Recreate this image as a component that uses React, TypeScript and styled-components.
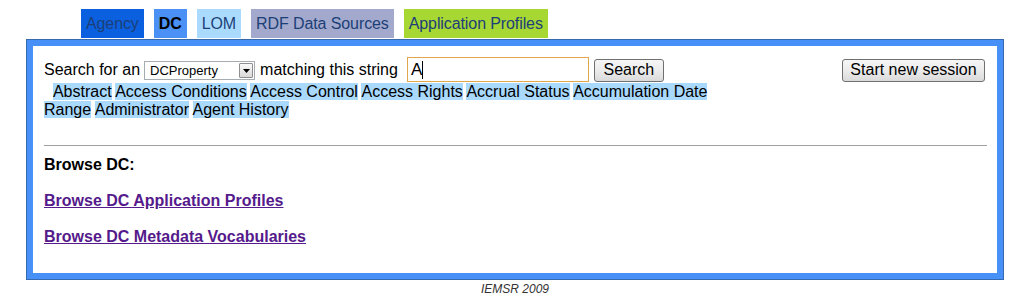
import React from "react"
import styled, { createGlobalStyle } from "styled-components"

const suggestions = [
  "Abstract",
  "Access Conditions",
  "Access Control",
  "Access Rights",
  "Accrual Status",
  "Accumulation Date",
  "Range",
  "Administrator",
  "Agent History",
]

const tabs = [
  { label: "Agency", bg: "#0b60e0", color: "#1c3f78", bold: false },
  { label: "DC", bg: "#4a90f5", color: "#000", bold: true },
  { label: "LOM", bg: "#aadbff", color: "#1c3f78", bold: false },
  { label: "RDF Data Sources", bg: "#a3a9cc", color: "#1c3f78", bold: false },
  { label: "Application Profiles", bg: "#a6d733", color: "#1c3f78", bold: false },
]

const GlobalStyle = createGlobalStyle`
  html, body {
    margin: 0;
    padding: 0;
    background: #fff;
    overflow: hidden;
  }
  body {
    font-family: "Liberation Sans", Arial, sans-serif;
    font-size: 16px;
    color: #000;
  }
`

const App: React.FC = () => {
  return (
    <Page>
      <GlobalStyle />
      <TabBar>
        {tabs.map(tab => (
          <Tab key={tab.label} bg={tab.bg} fg={tab.color} bold={tab.bold}>
            {tab.label}
          </Tab>
        ))}
      </TabBar>
      <Panel>
        <Content>
          <SearchRow>
            <Label>Search for an</Label>
            <SelectBox>
              <span>DCProperty</span>
              <ArrowBox>
                <svg width="7" height="4" viewBox="0 0 7 4">
                  <path d="M0 0 H7 L3.5 4 Z" fill="#000" />
                </svg>
              </ArrowBox>
            </SelectBox>
            <Label className="gap">matching this string</Label>
            <TextField>
              A<Caret />
            </TextField>
            <Button className="search">Search</Button>
            <Button className="session">Start new session</Button>
          </SearchRow>
          <Suggestions>
            {"\u00a0\u00a0"}
            {suggestions.map((item, index) => (
              <React.Fragment key={item}>
                {index > 0 && " "}
                <Hit>{item}</Hit>
              </React.Fragment>
            ))}
          </Suggestions>
          <Rule />
          <Heading>Browse DC:</Heading>
          <BrowseLink href="#">Browse DC Application Profiles</BrowseLink>
          <BrowseLink href="#">Browse DC Metadata Vocabularies</BrowseLink>
        </Content>
      </Panel>
      <Footer>IEMSR 2009</Footer>
    </Page>
  )
}

const Page = styled.div`
  width: 1024px;
  box-sizing: border-box;
  padding: 9px 20px 0 26px;
`

const TabBar = styled.div`
  display: flex;
  gap: 10px;
  margin-left: 55px;
  margin-bottom: 1px;
`

const Tab = styled.div<{ bg: string; fg: string; bold: boolean }>`
  height: 29px;
  line-height: 30px;
  padding: 0 5px;
  font-size: 16px;
  letter-spacing: -0.1px;
  background: ${props => props.bg};
  color: ${props => props.fg};
  font-weight: ${props => (props.bold ? 700 : 400)};
`

const Panel = styled.div`
  border: 1px solid #3669ad;
  background: #4790f7;
  padding: 6px;
`

const Content = styled.div`
  background: #fff;
  height: 227px;
  box-sizing: border-box;
  padding: 11px 10px 0 11px;
`

const SearchRow = styled.div`
  display: flex;
  align-items: center;
  height: 26px;

  .gap {
    margin-left: 5px;
  }

  .search {
    margin-left: 5px;
    width: 70px;
  }

  .session {
    margin-left: auto;
    margin-right: 2px;
    width: 143px;
  }
`

const Label = styled.span`
  font-size: 16px;
  white-space: nowrap;
`

const SelectBox = styled.div`
  display: flex;
  align-items: center;
  justify-content: space-between;
  width: 111px;
  height: 19px;
  box-sizing: border-box;
  margin-left: 4px;
  margin-top: 1px;
  padding-left: 5px;
  border: 1px solid #a5acb2;
  background: #fff;
  font-size: 13px;
`

const ArrowBox = styled.span`
  display: flex;
  align-items: center;
  justify-content: center;
  width: 14px;
  height: 15px;
  box-sizing: border-box;
  margin-right: 1px;
  border: 1px solid #8f8f8f;
  border-radius: 1px;
  background: linear-gradient(#fafafa, #d8d8d8);
`

const TextField = styled.div`
  display: flex;
  align-items: center;
  width: 182px;
  height: 25px;
  box-sizing: border-box;
  margin-left: 9px;
  margin-top: -1px;
  padding-left: 3px;
  border: 1px solid #e2a64f;
  background: #fff;
  font-size: 17px;
`

const Caret = styled.span`
  display: inline-block;
  width: 1px;
  height: 18px;
  background: #000;
`

const Button = styled.button`
  height: 23px;
  box-sizing: border-box;
  padding: 0;
  border: 1px solid #707070;
  border-radius: 3px;
  background: linear-gradient(#f6f6f6 0%, #ebebeb 50%, #dadada 100%);
  font-family: "Liberation Sans", Arial, sans-serif;
  font-size: 16px;
  color: #000;
`

const Suggestions = styled.div`
  width: 680px;
  font-size: 16px;
  line-height: 18px;
`

const Hit = styled.span`
  background: #a9d9fc;
`

const Rule = styled.hr`
  margin: 26px 0 0;
  border: 0;
  border-top: 1px solid #9f9f9f;
  height: 0;
`

const Heading = styled.div`
  margin-top: 10px;
  font-size: 16px;
  font-weight: 700;
  line-height: 18px;
`

const BrowseLink = styled.a`
  display: block;
  width: max-content;
  margin-top: 18px;
  font-size: 16px;
  font-weight: 700;
  line-height: 18px;
  color: #551a8b;
  text-decoration: underline;
`

const Footer = styled.div`
  margin-top: 2px;
  text-align: center;
  font-size: 12px;
  font-style: italic;
  line-height: 14px;
  color: #333;
`

export default App
